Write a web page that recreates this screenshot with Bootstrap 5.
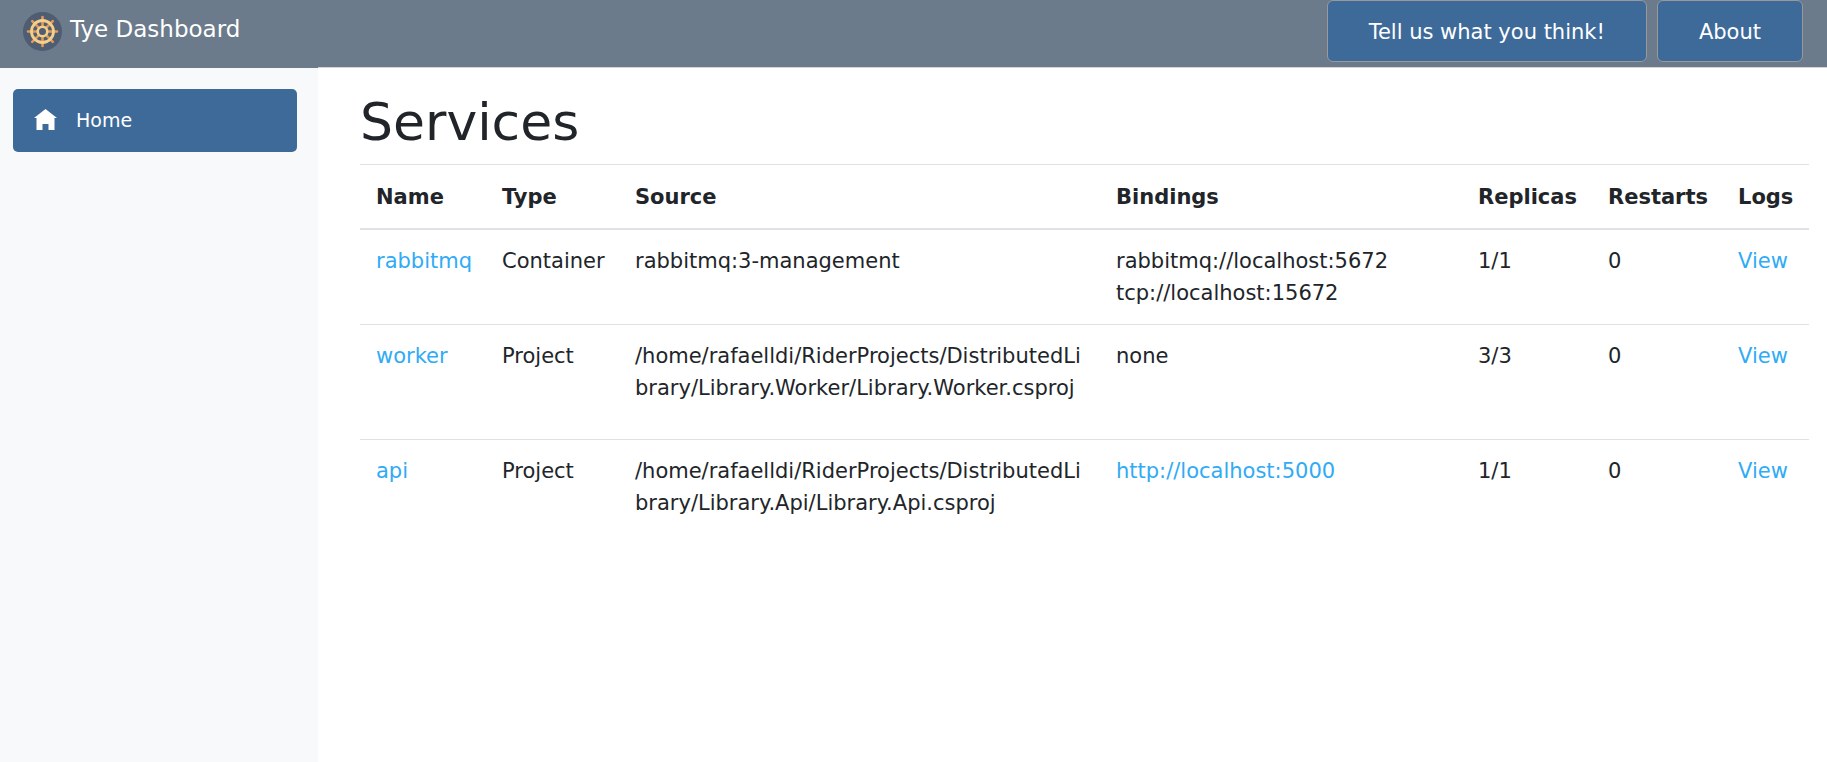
<!DOCTYPE html>
<html lang="en">
<head>
<meta charset="utf-8">
<meta name="viewport" content="width=device-width, initial-scale=1">
<title>Tye Dashboard</title>
<link href="https://cdn.jsdelivr.net/npm/bootstrap@5.3.0/dist/css/bootstrap.min.css" rel="stylesheet">
<style>
  body { font-family: "DejaVu Sans", sans-serif; font-size: 21px; line-height: 32px; color: #212529; background: #fff; }
  a { color: #30abf5; text-decoration: none; }
  .side-pane { width: 318px; background: #f8f9fb; }
  .brand-bar { height: 68px; background: #6b7b8b; padding: 0 23px 10px; }
  .brand-bar .navbar-brand { font-size: 23px; color: #fff; margin: 0; padding: 0; gap: 8px; }
  .brand-bar svg { margin-top: 5px; }
  .side-menu { padding: 21px 21px 21px 13px; }
  .side-menu .nav-link { height: 63px; padding: 0 21px 2px; gap: 19px; font-size: 19px; color: #fff; background: #3e6a9a; border-radius: 5px; }
  .top-bar { height: 68px; background: #6b7b8b; border-bottom: 1px solid #d6d5d5; padding: 0 24px; gap: 10px; }
  .top-bar .btn { height: 62px; padding: 4px 41px 0; font-size: 21px; color: #fff; background: #3e6a9a; border: 1px solid #999; border-radius: 6px; }
  .main-pane { padding: 22px 18px 22px 42px; }
  h1 { font-size: 52px; line-height: 64px; font-weight: 400; margin: 0 0 10px; }
  .services { table-layout: fixed; width: 100%; border-collapse: separate; border-spacing: 0; }
  .services th, .services td { padding: 15px 16px; border-top: 1px solid #dee2e6; vertical-align: top; overflow-wrap: anywhere; }
  .services th { padding: 16px 0 15px 16px; border-bottom: 2px solid #dee2e6; overflow-wrap: normal; }
  .services tbody tr:first-child td { border-top: 0; }
  .path-text { margin-bottom: 20px; }
  .w-name { width: 126px; } .w-type { width: 133px; } .w-source { width: 481px; }
  .w-replicas { width: 130px; } .w-restarts { width: 130px; } .w-logs { width: 87px; }
  .services td:nth-child(-n+2) { padding-right: 0; overflow-wrap: normal; }
</style>
</head>
<body>
<div class="d-flex min-vh-100">
  <aside class="side-pane flex-shrink-0">
    <div class="brand-bar d-flex align-items-center">
      <a class="navbar-brand d-flex align-items-center" href="#">
        <svg width="39" height="39" viewBox="0 0 39 39" fill="none" aria-hidden="true">
          <circle cx="19.500" cy="19.500" r="19.500" fill="#4f5d73"/>
          <g stroke="#e0995e" stroke-width="2.600" stroke-linecap="round">
            <path d="M19.500 5v8.500M19.500 25.500V34M5 19.500h8.500M25.500 19.500H34M9.200 9.200l6 6M23.800 23.800l6 6M29.800 9.200l-6 6M15.200 23.800l-6 6"/>
          </g>
          <circle cx="19.500" cy="19.500" r="11" stroke="#f5cf87" stroke-width="2.800"/>
          <circle cx="19.500" cy="19.500" r="4.800" stroke="#f5cf87" stroke-width="2.600"/>
        </svg>
        <span>Tye Dashboard</span>
      </a>
    </div>
    <nav class="side-menu nav flex-column">
      <a class="nav-link d-flex align-items-center" href="#" aria-current="page">
        <svg width="23" height="21" viewBox="0 0 23 21" fill="#fff" aria-hidden="true"><path d="M11.500 0L0 9h2.500v12h6v-6h6v6h6V9H23z"/></svg>
        <span>Home</span>
      </a>
    </nav>
  </aside>
  <div class="flex-grow-1">
    <header class="top-bar d-flex justify-content-end align-items-start">
      <button type="button" class="btn">Tell us what you think!</button>
      <button type="button" class="btn">About</button>
    </header>
    <main class="main-pane">
      <h1>Services</h1>
      <table class="services">
        <colgroup><col class="w-name"><col class="w-type"><col class="w-source"><col class="w-bindings"><col class="w-replicas"><col class="w-restarts"><col class="w-logs"></colgroup>
        <thead>
          <tr><th scope="col">Name</th><th scope="col">Type</th><th scope="col">Source</th><th scope="col">Bindings</th><th scope="col">Replicas</th><th scope="col">Restarts</th><th scope="col">Logs</th></tr>
        </thead>
        <tbody>
          <tr>
            <td><a href="#">rabbitmq</a></td><td>Container</td><td>rabbitmq:3-management</td>
            <td><div>rabbitmq://localhost:5672</div><div>tcp://localhost:15672</div></td>
            <td>1/1</td><td>0</td><td><a href="#">View</a></td>
          </tr>
          <tr>
            <td><a href="#">worker</a></td><td>Project</td>
            <td><p class="path-text text-break">/home/rafaelldi/RiderProjects/DistributedLibrary/Library.Worker/Library.Worker.csproj</p></td>
            <td>none</td><td>3/3</td><td>0</td><td><a href="#">View</a></td>
          </tr>
          <tr>
            <td><a href="#">api</a></td><td>Project</td>
            <td><p class="path-text text-break">/home/rafaelldi/RiderProjects/DistributedLibrary/Library.Api/Library.Api.csproj</p></td>
            <td><a href="#">http://localhost:5000</a></td><td>1/1</td><td>0</td><td><a href="#">View</a></td>
          </tr>
        </tbody>
      </table>
    </main>
  </div>
</div>
<script src="https://cdn.jsdelivr.net/npm/bootstrap@5.3.0/dist/js/bootstrap.bundle.min.js"></script>
</body>
</html>
